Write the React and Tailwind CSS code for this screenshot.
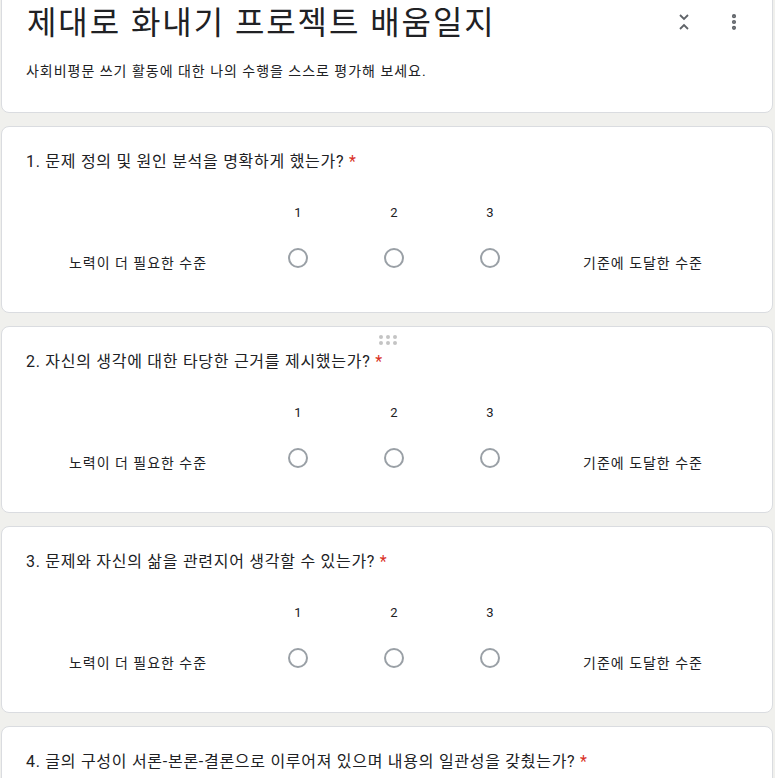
import { MoreVertical } from 'lucide-react'

const questions = [
    '1. 문제 정의 및 원인 분석을 명확하게 했는가?',
    '2. 자신의 생각에 대한 타당한 근거를 제시했는가?',
    '3. 문제와 자신의 삶을 관련지어 생각할 수 있는가?',
    '4. 글의 구성이 서론-본론-결론으로 이루어져 있으며 내용의 일관성을 갖췄는가?',
]

const CollapseIcon = () => (
    <svg width="14" height="20" viewBox="0 0 14 20" fill="none" stroke="#5f6368" strokeWidth="1.8">
        <path d="M3 3 L7 7 L11 3" />
        <path d="M3 17 L7 13 L11 17" />
    </svg>
)

const DragHandle = () => (
    <div className="grid grid-cols-3 gap-x-[3px] gap-y-[2px]">
        {Array.from({ length: 6 }).map((_, i) => (
            <div key={i} className="w-[4px] h-[4px] rounded-full bg-[#c4c4c4]" />
        ))}
    </div>
)

const Radio = () => (
    <div className="w-[20px] h-[20px] rounded-full border-2 border-[#9aa0a6] bg-white" />
)

const QuestionCard = ({ text, index }) => (
    <div className="relative bg-white rounded-lg border border-[#dadce0] h-[187px] px-6 pt-[23px]">
        {index === 1 && (
            <div className="absolute left-[377px] top-[8px]">
                <DragHandle />
            </div>
        )}
        <p className="text-[16px] leading-6 text-[#202124] tracking-[0.045em]">
            {text} <span className="text-[#d93025]">*</span>
        </p>
        <div className="flex mt-[29px]">
            <div className="w-[224px] flex flex-col">
                <div className="h-[48px]" />
                <div className="h-[24px] flex items-center justify-center text-[14px] text-[#202124] tracking-[0.07em]">
                    노력이 더 필요한 수준
                </div>
            </div>
            {[1, 2, 3].map((n) => (
                <div key={n} className="w-[96px] flex flex-col items-center">
                    <div className="h-[20px] flex items-center text-[13px] text-[#202124]">{n}</div>
                    <div className="h-[25px]" />
                    <Radio />
                </div>
            ))}
            <div className="w-[210px] flex flex-col">
                <div className="h-[48px]" />
                <div className="h-[24px] flex items-center justify-center text-[14px] text-[#202124] tracking-[0.07em]">
                    기준에 도달한 수준
                </div>
            </div>
        </div>
    </div>
)

export default function App() {
    return (
        <div
            className="h-[778px] bg-[#f0f0ed] pl-[1px] pr-[2px] overflow-hidden"
            style={{ fontFamily: 'Roboto, "Noto Sans CJK KR", sans-serif' }}
        >
            <div className="flex flex-col gap-[13px]">
                <div className="-mt-[22px] bg-white rounded-lg border border-[#dadce0] pt-[24px] pb-[31px] px-6">
                    <div className="flex items-start justify-between">
                        <h1 className="text-[32px] leading-10 text-[#202124] pl-[1px] tracking-[0.06em]">
                            제대로 화내기 프로젝트 배움일지
                        </h1>
                        <div className="flex items-center gap-[33px] pr-[4px] pt-[9px]">
                            <CollapseIcon />
                            <MoreVertical className="w-5 h-5 text-[#5f6368]" strokeWidth={3} />
                        </div>
                    </div>
                    <p className="mt-[18px] text-[14px] leading-5 text-[#202124] tracking-[0.07em]">
                        사회비평문 쓰기 활동에 대한 나의 수행을 스스로 평가해 보세요.
                    </p>
                </div>
                {questions.map((q, i) => (
                    <QuestionCard key={i} text={q} index={i} />
                ))}
            </div>
        </div>
    )
}
